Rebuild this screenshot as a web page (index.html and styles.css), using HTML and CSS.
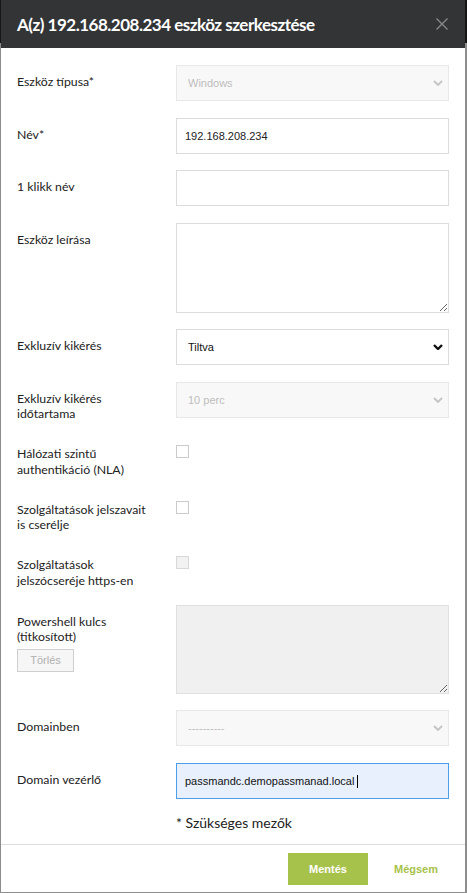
FILE: index.html
```html
<!DOCTYPE html>
<html lang="hu">
<head>
<meta charset="utf-8">
<title>Eszköz szerkesztése</title>
<link rel="stylesheet" href="styles.css">
</head>
<body>
<div class="modal">
  <div class="modal-header">
    <h1 class="title">A(z) 192.168.208.234 eszköz szerkesztése</h1>
    <button class="close" type="button" aria-label="Bezárás">
      <svg width="12" height="12" viewBox="0 0 12 12"><path d="M0.5 0.5 L11.5 11.5 M11.5 0.5 L0.5 11.5" stroke="#8a8a8a" stroke-width="1.3" fill="none"/></svg>
    </button>
  </div>
  <form class="modal-body">
    <div class="row">
      <label class="label">Eszköz típusa*</label>
      <div class="select-wrap">
        <select class="field select" disabled><option>Windows</option></select>
        <svg class="chev" width="10" height="6" viewBox="0 0 10 6"><path d="M1 1 L5 5 L9 1" stroke="#c4c4c4" stroke-width="1.8" fill="none"/></svg>
      </div>
    </div>
    <div class="row">
      <label class="label">Név*</label>
      <input class="field input" type="text" value="192.168.208.234">
    </div>
    <div class="row">
      <label class="label">1 klikk név</label>
      <input class="field input" type="text" value="">
    </div>
    <div class="row">
      <label class="label">Eszköz leírása</label>
      <textarea class="field textarea"></textarea>
    </div>
    <div class="row">
      <label class="label">Exkluzív kikérés</label>
      <div class="select-wrap">
        <select class="field select active"><option>Tiltva</option></select>
        <svg class="chev" width="10" height="6" viewBox="0 0 10 6"><path d="M1 1 L5 5 L9 1" stroke="#111" stroke-width="2.4" fill="none"/></svg>
      </div>
    </div>
    <div class="row">
      <label class="label">Exkluzív kikérés<br>időtartama</label>
      <div class="select-wrap">
        <select class="field select" disabled><option>10 perc</option></select>
        <svg class="chev" width="10" height="6" viewBox="0 0 10 6"><path d="M1 1 L5 5 L9 1" stroke="#c4c4c4" stroke-width="1.8" fill="none"/></svg>
      </div>
    </div>
    <div class="row check">
      <label class="label">Hálózati szintű<br>authentikáció (NLA)</label>
      <input class="checkbox" type="checkbox">
    </div>
    <div class="row check">
      <label class="label">Szolgáltatások jelszavait<br>is cserélje</label>
      <input class="checkbox" type="checkbox">
    </div>
    <div class="row check">
      <label class="label">Szolgáltatások<br>jelszócseréje https-en</label>
      <input class="checkbox disabled" type="checkbox" disabled>
    </div>
    <div class="row">
      <div class="label">
        <label>Powershell kulcs<br>(titkosított)</label>
        <button class="btn-clear" type="button" disabled>Törlés</button>
      </div>
      <textarea class="field textarea locked" disabled></textarea>
    </div>
    <div class="row">
      <label class="label">Domainben</label>
      <div class="select-wrap">
        <select class="field select" disabled><option>----------</option></select>
        <svg class="chev" width="10" height="6" viewBox="0 0 10 6"><path d="M1 1 L5 5 L9 1" stroke="#c4c4c4" stroke-width="1.8" fill="none"/></svg>
      </div>
    </div>
    <div class="row">
      <label class="label">Domain vezérlő</label>
      <div class="focus-wrap">
        <input class="field input focused" type="text" value="passmandc.demopassmanad.local">
        <span class="caret"></span>
      </div>
    </div>
    <p class="note">* Szükséges mezők</p>
  </form>
  <div class="modal-footer">
    <button class="btn-save" type="button">Mentés</button>
    <button class="btn-cancel" type="button">Mégsem</button>
  </div>
</div>
</body>
</html>
```

FILE: styles.css
```css
* { box-sizing: border-box; }
html, body { margin: 0; padding: 0; }
body {
  background: linear-gradient(#161616 0, #161616 43px, #8d8d8d 43px);
  font-family: "Lato", "Liberation Sans", sans-serif;
  min-height: 893px;
}
.modal {
  margin-left: 1px;
  width: 464px;
  background: #fff;
}
.modal-header {
  height: 48px;
  background: #333436;
  display: flex;
  align-items: center;
  justify-content: space-between;
  padding: 0 17px 0 16px;
}
.title {
  margin: 0;
  font-family: "Lato", sans-serif;
  font-weight: 700;
  font-size: 17px;
  color: #fff;
  letter-spacing: -0.5px;
}
.close {
  border: 0;
  background: none;
  padding: 0;
  width: 12px;
  height: 12px;
  display: flex;
}
.modal-body {
  padding: 17px 16px 0 16px;
  margin: 0;
}
.row {
  display: grid;
  grid-template-columns: 159px 273px;
  align-items: start;
  margin-bottom: 16.5px;
}
.row.check { padding-top: 7px; }
.label {
  display: block;
  padding-top: 9px;
  font-size: 12.3px;
  line-height: 15.5px;
  color: #222;
  white-space: nowrap;
}
.row.check .label { padding-top: 1px; }
.field {
  display: block;
  width: 100%;
  margin: 0;
  border: 1px solid #dcdcdc;
  border-radius: 0;
  outline: none;
  font-family: "Liberation Sans", Arial, sans-serif;
  font-size: 11px;
  color: #222;
  background: #fff;
}
.input {
  height: 36px;
  padding: 0 8px;
}
.input.focused {
  border-color: #4a9fe8;
  background: #e8f0fe;
  color: #111;
}
.focus-wrap { position: relative; }
.caret {
  position: absolute;
  left: 181px;
  top: 12px;
  width: 1px;
  height: 13px;
  background: #000;
}
.select-wrap { position: relative; }
.select {
  height: 36px;
  padding: 0 24px 0 11px;
  appearance: none;
  -webkit-appearance: none;
}
.select:disabled {
  background: #f8f8f8;
  border-color: #e8e8e8;
  color: #bdbdbd;
  opacity: 1;
}
.select.active { color: #111; }
.chev {
  position: absolute;
  right: 6px;
  top: 15px;
  pointer-events: none;
}
.textarea {
  height: 90px;
  padding: 8px;
  resize: vertical;
}
.textarea.locked {
  height: 89px;
  background: #f0f0f0;
  border-color: #e0e0e0;
}
.checkbox {
  appearance: none;
  -webkit-appearance: none;
  width: 13px;
  height: 13px;
  margin: 0;
  border: 1px solid #cbcbcb;
  background: #fff;
  border-radius: 0;
}
.checkbox.disabled {
  background: #f2f2f2;
  border-color: #d8d8d8;
}
.btn-clear {
  display: block;
  margin-top: 4px;
  width: 57px;
  height: 23px;
  padding: 0;
  border: 1px solid #cfcfcf;
  background: #f6f6f6;
  color: #b0b0b0;
  font-family: "Liberation Sans", Arial, sans-serif;
  font-size: 11px;
  border-radius: 0;
}
.note {
  margin: 0 0 0 159px;
  padding-bottom: 13.5px;
  font-size: 14px;
  line-height: 15px;
  color: #222;
}
.modal-footer {
  border-top: 1px solid #dddddd;
  padding: 8px 1px 7px 0;
  display: flex;
  justify-content: flex-end;
}
.btn-save, .btn-cancel {
  height: 32px;
  border: 0;
  border-radius: 0;
  font-family: "Liberation Sans", Arial, sans-serif;
  font-weight: 700;
  font-size: 11px;
}
.btn-save {
  width: 80px;
  background: #a7c24b;
  color: #fff;
}
.btn-cancel {
  padding: 0 26px;
  background: none;
  color: #a7c24b;
}
```
